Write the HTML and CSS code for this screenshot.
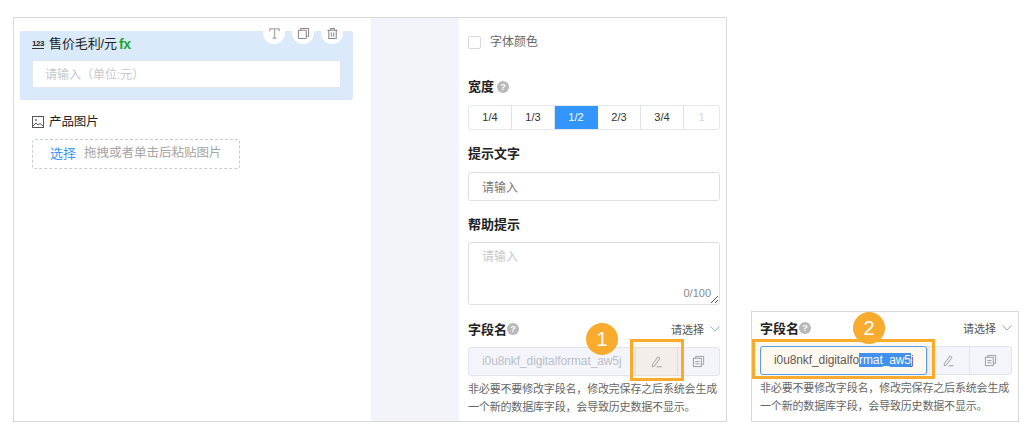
FILE: index.html
```html
<!DOCTYPE html>
<html lang="zh">
<head>
<meta charset="utf-8">
<title>字段设置</title>
<link rel="stylesheet" href="styles.css">
</head>
<body>
<main class="stage">
  <section class="panel main-panel">
    <div class="canvas">
      <div class="card">
        <div class="tools">
          <span class="tool"><svg viewBox="0 0 14 14" width="13" height="13"><path d="M2 4.5V2h10v2.5M7 2v10M4.8 12h4.4" fill="none" stroke="#a8a8a8" stroke-width="1.4"/></svg></span>
          <span class="tool"><svg viewBox="0 0 14 14" width="13" height="13"><rect x="1.5" y="3.5" width="8.5" height="9" rx="1" fill="none" stroke="#888" stroke-width="1.1"/><path d="M4 3.5V1.5h8.5v8.5H10" fill="none" stroke="#888" stroke-width="1.1"/></svg></span>
          <span class="tool"><svg viewBox="0 0 14 14" width="13" height="13"><path d="M1.5 3.5h11M5 3.5V1.5h4v2M3 3.5v9h8v-9M5.7 6v4.5M8.3 6v4.5" fill="none" stroke="#888" stroke-width="1.1"/></svg></span>
        </div>
        <div class="field-label">
          <span class="num-icon">123</span>
          <span>售价毛利/元</span>
          <span class="fx">fx</span>
        </div>
        <div class="text-input placeholder">请输入（单位:元）</div>
      </div>
      <div class="image-field">
        <div class="field-label image-label">
          <svg class="img-icon" viewBox="0 0 12 12" width="12" height="12"><rect x="0.5" y="0.5" width="11" height="11" fill="none" stroke="#555"/><path d="M1 10l3-3 2 2 2-1.5 3 2.5" fill="none" stroke="#555"/><circle cx="4" cy="4" r="1" fill="#777"/></svg>
          <span>产品图片</span>
        </div>
        <div class="upload"><span class="link">选择</span><span class="hint">拖拽或者单击后粘贴图片</span></div>
      </div>
    </div>
    <div class="gutter"></div>
    <div class="settings">
      <label class="check-row"><span class="checkbox"></span><span class="check-text">字体颜色</span></label>
      <div class="title width-title">宽度<span class="help">?</span></div>
      <div class="segments">
        <span class="seg">1/4</span><span class="seg">1/3</span><span class="seg on">1/2</span><span class="seg">2/3</span><span class="seg">3/4</span><span class="seg off">1</span>
      </div>
      <div class="title hint-title">提示文字</div>
      <div class="box-input">请输入</div>
      <div class="title help-title">帮助提示</div>
      <div class="textarea">请输入<span class="count">0/100</span>
        <svg class="grip" viewBox="0 0 9 9" width="9" height="9"><path d="M1 8l7-7M5 8l3-3" stroke="#555" fill="none"/></svg>
      </div>
      <div class="name-block first">
        <div class="name-head"><span class="title name-title">字段名<span class="help">?</span></span><span class="select">请选择<svg viewBox="0 0 10 6" width="10" height="6"><path d="M.5.5L5 5 9.5.5" fill="none" stroke="#7db6f0"/></svg></span></div>
        <div class="group">
          <div class="group-input muted">i0u8nkf_digitalformat_aw5j</div>
          <span class="group-btn"><svg viewBox="0 0 14 14" width="13" height="13"><path d="M2.5 10.5L8.5 2l2.2 1.6-6 8.4-2.3.6zM7 12.7h5.5" fill="none" stroke="#999"/></svg></span>
          <span class="group-btn"><svg viewBox="0 0 14 14" width="13" height="13"><rect x="1.5" y="3.5" width="8.5" height="9" fill="none" stroke="#999"/><path d="M4 3.5v-2h8.5V10H10M3.5 7h4.5M3.5 9.5h4.5" fill="none" stroke="#999"/></svg></span>
        </div>
        <p class="note">非必要不要修改字段名，修改完保存之后系统会生成一个新的数据库字段，会导致历史数据不显示。</p>
        <span class="mark mark-one"></span>
        <span class="badge badge-one">1</span>
      </div>
    </div>
  </section>
  <section class="panel side-panel">
    <div class="name-block">
      <div class="name-head"><span class="title name-title">字段名<span class="help">?</span></span><span class="select">请选择<svg viewBox="0 0 10 6" width="10" height="6"><path d="M.5.5L5 5 9.5.5" fill="none" stroke="#aaa"/></svg></span></div>
      <div class="group">
        <div class="group-input active">i0u8nkf_digitalfo<span class="sel">rmat_aw5</span>j</div>
        <span class="group-btn"><svg viewBox="0 0 14 14" width="13" height="13"><path d="M2.5 10.5L8.5 2l2.2 1.6-6 8.4-2.3.6zM7 12.7h5.5" fill="none" stroke="#999"/></svg></span>
        <span class="group-btn"><svg viewBox="0 0 14 14" width="13" height="13"><rect x="1.5" y="3.5" width="8.5" height="9" fill="none" stroke="#999"/><path d="M4 3.5v-2h8.5V10H10M3.5 7h4.5M3.5 9.5h4.5" fill="none" stroke="#999"/></svg></span>
      </div>
      <p class="note">非必要不要修改字段名，修改完保存之后系统会生成一个新的数据库字段，会导致历史数据不显示。</p>
      <span class="mark mark-two"></span>
      <span class="badge badge-two">2</span>
    </div>
  </section>
</main>
</body>
</html>
```
FILE: styles.css
```css
* { box-sizing: border-box; }
html, body { margin: 0; height: 100%; background: #fff; }
body {
  font-family: "Liberation Sans", "Noto Sans CJK SC", sans-serif;
  font-size: 12px;
  color: #222;
  overflow: hidden;
}
.stage {
  display: flex;
  align-items: flex-end;
  gap: 24px;
  width: 1033px;
  height: 422px;
  padding-left: 13px;
}
.panel { border: 1px solid #d9d9d9; background: #fff; }
.main-panel { display: flex; width: 714px; height: 405px; }
.side-panel { width: 268px; height: 111px; padding: 0 6px 0 8px; }

.canvas { width: 357px; padding: 13px 0 0 6px; }
.card {
  position: relative;
  width: 333px;
  height: 69px;
  padding: 4px 12px 0;
  background: #dbeafb;
  border-radius: 2px;
}
.tools {
  position: absolute;
  top: -9px;
  right: 10px;
  display: flex;
  gap: 7px;
}
.tool {
  display: flex;
  align-items: center;
  justify-content: center;
  width: 22px;
  height: 22px;
  border-radius: 50%;
  background: #fff;
}
.field-label {
  display: flex;
  align-items: center;
  height: 18px;
  padding-bottom: 4px;
  font-size: 13px;
  letter-spacing: -.1px;
  color: #222;
}
.image-label { font-size: 12.5px; }
.num-icon {
  width: 12px;
  margin: 4px 5px 0 0;
  font-size: 8px;
  font-weight: bold;
  line-height: 9px;
  letter-spacing: -.4px;
  border-bottom: 1px solid #333;
}
.fx {
  margin: 4px 0 0 2px;
  font-size: 14px;
  font-weight: bold;
  letter-spacing: -.4px;
  color: #19a52f;
}
.text-input {
  height: 28px;
  margin-top: 7px;
  padding-left: 12px;
  background: #fff;
  border: 1px solid #e4e7ee;
  border-radius: 2px;
  line-height: 28px;
}
.placeholder { color: #c6c8cc; }
.image-field { margin: 13px 0 0 12px; }
.img-icon { margin: 4px 5px 0 0; }
.upload {
  display: flex;
  gap: 8px;
  width: 208px;
  height: 30px;
  margin-top: 8px;
  padding-left: 17px;
  border: 1px dashed #c8ccd8;
  border-radius: 3px;
  line-height: 27px;
}
.link { color: #3b95f5; font-size: 13px; }
.hint { color: #a5a5a5; font-size: 12.5px; }
.gutter { width: 88px; background: #f2f4f9; }

.settings { width: 267px; padding: 0 6px 0 9px; }
.check-row {
  display: flex;
  align-items: center;
  gap: 9px;
  height: 14px;
  margin-top: 17px;
  color: #666;
}
.check-text { padding-bottom: 4px; }
.checkbox {
  width: 13px;
  height: 13px;
  border: 1px solid #d9d9d9;
  border-radius: 2px;
}
.title {
  display: flex;
  align-items: center;
  height: 18px;
  padding-bottom: 4px;
  font-size: 13px;
  font-weight: bold;
  color: #222;
}
.width-title { margin-top: 29px; }
.hint-title { margin-top: 15px; }
.help-title { margin-top: 15px; }
.help {
  display: flex;
  align-items: center;
  justify-content: center;
  width: 12px;
  height: 12px;
  margin: 4px 0 0 3px;
  border-radius: 50%;
  background: #b8b8b8;
  color: #fff;
  font-size: 9px;
}
.segments {
  display: flex;
  height: 25px;
  margin-top: 9px;
  border: 1px solid #e4e7ee;
  border-radius: 3px;
  overflow: hidden;
}
.seg {
  width: 43px;
  text-align: center;
  line-height: 23px;
  font-size: 11px;
  color: #333;
  border-right: 1px solid #dfe2ea;
}
.seg:last-child { flex: 1; border-right: 0; }
.seg.on { background: #3395ff; color: #fff; border-right-color: #3395ff; }
.seg.off { color: #d8d8d8; }
.box-input {
  height: 29px;
  margin-top: 9px;
  padding-left: 13px;
  border: 1px solid #dcdfe8;
  border-radius: 3px;
  line-height: 30px;
  color: #777;
}
.textarea {
  position: relative;
  height: 63px;
  margin-top: 8px;
  padding: 6px 13px;
  border: 1px solid #dcdfe8;
  border-radius: 3px;
  color: #c6c8cc;
  line-height: 17px;
}
.count {
  position: absolute;
  right: 8px;
  bottom: 2px;
  font-size: 11px;
  color: #8a8a8a;
}
.grip { position: absolute; right: 0; bottom: 0; }
.name-block { position: relative; }
.name-block.first { margin-top: 16px; }
.side-panel .name-block { padding-top: 8px; }
.name-head {
  display: flex;
  justify-content: space-between;
  align-items: center;
  height: 18px;
  padding-bottom: 2px;
}
.name-title { padding-bottom: 2px; height: 16px; }
.name-title .help { margin: 2px 0 0; }
.select { display: flex; align-items: center; gap: 6px; font-size: 11px; color: #555; }
.group {
  display: flex;
  height: 29px;
  margin-top: 8px;
  background: #f3f5fa;
  border: 1px solid #e2e5ed;
  border-radius: 3px;
}
.group-input {
  flex: 1;
  padding-left: 13px;
  line-height: 27px;
  white-space: nowrap;
  font-size: 12px;
  letter-spacing: -.1px;
}
.group-input.muted { color: #bcc0c8; }
.group-input.active {
  margin: -1px 0 -1px -1px;
  background: #fff;
  border: 1px solid #4a9df5;
  border-radius: 3px;
  color: #555;
}
.sel { background: #3390ff; color: #fff; }
.group-btn {
  display: flex;
  align-items: center;
  justify-content: center;
  width: 42px;
  border-left: 1px solid #e0e3ea;
}
.note {
  margin: 4px 0 0;
  font-size: 11px;
  line-height: 18px;
  letter-spacing: -.17px;
  color: #666;
}
.mark {
  position: absolute;
  border: 3px solid #f9ab2d;
  background: rgba(249, 171, 45, .08);
}
.mark-one { left: 162px; top: 18px; width: 54px; height: 42px; }
.mark-two { left: -8px; top: 27px; width: 183px; height: 40px; }
.badge {
  position: absolute;
  width: 32px;
  height: 32px;
  border-radius: 50%;
  background: #f9ab2d;
  color: #fff;
  font-size: 20px;
  line-height: 32px;
  text-align: center;
}
.badge-one { left: 118px; top: 2px; }
.badge-two { left: 93px; top: 0; }
```
